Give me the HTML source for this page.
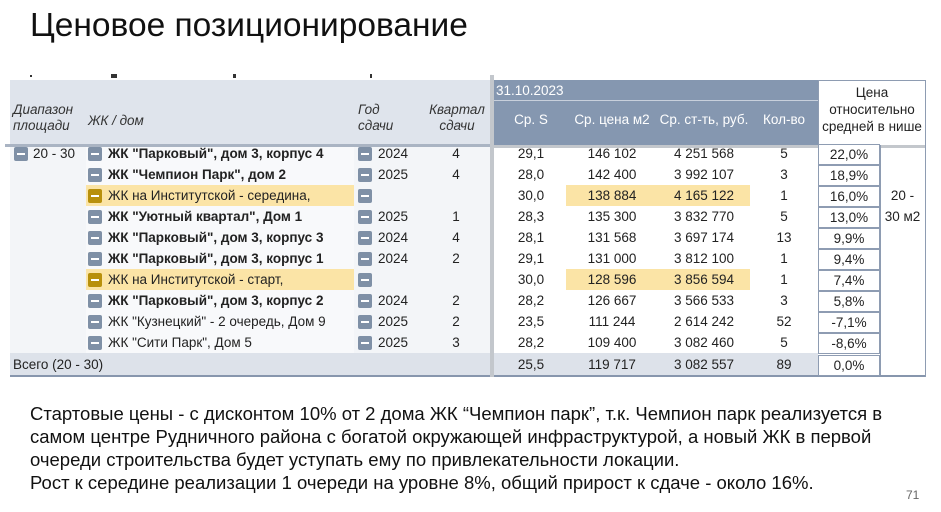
<!DOCTYPE html>
<html><head><meta charset="utf-8"><style>
*{margin:0;padding:0;box-sizing:border-box}
body{width:941px;height:512px;background:#fff;font-family:"Liberation Sans",Arial,sans-serif;position:relative;overflow:hidden;color:#222}
.a{position:absolute;white-space:nowrap}
.t{font-size:13.5px;line-height:21px}
.m{position:absolute;width:14px;height:14px;background:#7f90a6;border-radius:2px}
.m::after{content:"";position:absolute;left:3px;right:3px;top:6px;height:2px;background:#fff}
.my{background:#b8900c}
.c{text-align:center}
.b{font-weight:bold}
.pc{position:absolute;left:818px;width:62px;height:21px;border:1px solid #8e9cb2;text-align:center;font-size:13.5px;line-height:19px;background:#fff}
</style></head><body>
<div class="a" style="left:30px;top:7px;font-size:33.5px;color:#111">Ценовое позиционирование</div>
<div class="a" style="left:30px;top:75px;width:2px;height:2px;background:#333"></div>
<div class="a" style="left:111px;top:74px;width:6px;height:4px;background:#333"></div>
<div class="a" style="left:233px;top:74px;width:3px;height:4px;background:#333"></div>
<div class="a" style="left:370px;top:74px;width:2px;height:4px;background:#333"></div>
<div class="a" style="left:10px;top:80px;width:480px;height:65px;background:#dfe4ec"></div>
<div class="a" style="left:5px;top:144px;width:485px;height:3px;background:#aab4c3"></div>
<div class="a" style="left:10px;top:147px;width:480px;height:206px;background:#f3f5f8"></div>
<div class="a" style="left:86px;top:147px;width:268px;height:206px;background:#f8f9fb"></div>
<div class="a" style="left:10px;top:353px;width:808px;height:22px;background:#dde2ea"></div>
<div class="a" style="left:10px;top:375px;width:916px;height:2px;background:#8796ad"></div>
<div class="a" style="left:490px;top:75px;width:4px;height:302px;background:#c3c7cc"></div>
<div class="a t" style="left:13px;top:102px;font-style:italic;line-height:16px;color:#333">Диапазон<br>площади</div>
<div class="a t" style="left:88px;top:110px;font-style:italic;color:#333">ЖК / дом</div>
<div class="a t" style="left:358px;top:102px;font-style:italic;line-height:16px;color:#333">Год<br>сдачи</div>
<div class="a t c" style="left:425px;top:102px;width:64px;font-style:italic;line-height:16px;color:#333">Квартал<br>сдачи</div>
<div class="a" style="left:494px;top:80px;width:324px;height:65px;background:#8597b0"></div>
<div class="a" style="left:494px;top:100px;width:324px;height:1px;background:#c8d0dc"></div>
<div class="a t" style="left:496px;top:80px;color:#fff">31.10.2023</div>
<div class="a t c" style="left:505px;top:109px;width:52px;color:#fff">Ср. S</div>
<div class="a t c" style="left:566px;top:109px;width:92px;color:#fff">Ср. цена м2</div>
<div class="a t c" style="left:654px;top:109px;width:100px;color:#fff">Ср. ст-ть, руб.</div>
<div class="a t c" style="left:756px;top:109px;width:56px;color:#fff">Кол-во</div>
<div class="a" style="left:818px;top:80px;width:108px;height:65px;border:1px solid #8e9cb2;border-bottom:none"></div>
<div class="a c" style="left:818px;top:84px;width:108px;font-size:13.5px;line-height:17px">Цена<br>относительно<br>средней в нише</div>
<div class="a" style="left:494px;top:145px;width:432px;height:3px;background:#c3c7cc"></div>
<div class="a" style="left:925px;top:80px;width:1px;height:297px;background:#8e9cb2"></div>
<div class="a" style="left:880px;top:145px;width:1px;height:230px;background:#8e9cb2"></div>
<div class="a t c" style="left:880px;top:185px;width:45px;line-height:21px">20 -<br>30 м2</div>
<div class="a" style="left:86px;top:185px;width:268px;height:21px;background:#fbe4a6"></div>
<div class="a" style="left:566px;top:185px;width:184px;height:21px;background:#fbe4a6"></div>
<div class="a" style="left:86px;top:269px;width:268px;height:21px;background:#fbe4a6"></div>
<div class="a" style="left:566px;top:269px;width:184px;height:21px;background:#fbe4a6"></div>
<div class="m" style="left:14px;top:147px"></div>
<div class="a t" style="left:33px;top:143px">20 - 30</div>
<div id="rows"></div>
<div class="a t" style="left:13px;top:354px">Всего (20 - 30)</div>
<div class="a t c" style="left:505px;top:354px;width:52px">25,5</div>
<div class="a t c" style="left:568px;top:354px;width:88px">119 717</div>
<div class="a t c" style="left:656px;top:354px;width:96px">3 082 557</div>
<div class="a t c" style="left:756px;top:354px;width:56px">89</div>
<div class="pc" style="top:355px">0,0%</div>
<div class="a" style="left:30px;top:402px;font-size:18.5px;line-height:23px;color:#111;white-space:normal;width:880px">Стартовые цены - с дисконтом 10% от 2 дома ЖК “Чемпион парк”, т.к. Чемпион парк реализуется в самом центре Рудничного района с богатой окружающей инфраструктурой, а новый ЖК в первой очереди строительства будет уступать ему по привлекательности локации.<br>Рост к середине реализации 1 очереди на уровне 8%, общий прирост к сдаче - около 16%.</div>
<div class="a" style="left:906px;top:488px;font-size:12px;color:#666">71</div>
<script>
var R=[
["ЖК \"Парковый\", дом 3, корпус 4",1,"2024","4","29,1","146 102","4 251 568","5","22,0%",0],
["ЖК \"Чемпион Парк\", дом 2",1,"2025","4","28,0","142 400","3 992 107","3","18,9%",0],
["ЖК на Институтской - середина,",0,"","","30,0","138 884","4 165 122","1","16,0%",1],
["ЖК \"Уютный квартал\", Дом 1",1,"2025","1","28,3","135 300","3 832 770","5","13,0%",0],
["ЖК \"Парковый\", дом 3, корпус 3",1,"2024","4","28,1","131 568","3 697 174","13","9,9%",0],
["ЖК \"Парковый\", дом 3, корпус 1",1,"2024","2","29,1","131 000","3 812 100","1","9,4%",0],
["ЖК на Институтской - старт,",0,"","","30,0","128 596","3 856 594","1","7,4%",1],
["ЖК \"Парковый\", дом 3, корпус 2",1,"2024","2","28,2","126 667","3 566 533","3","5,8%",0],
["ЖК \"Кузнецкий\" - 2 очередь, Дом 9",0,"2025","2","23,5","111 244","2 614 242","52","-7,1%",0],
["ЖК \"Сити Парк\", Дом 5",0,"2025","3","28,2","109 400","3 082 460","5","-8,6%",0]];
var h="";
R.forEach(function(r,i){var y=143+i*21;
h+='<div class="m'+(r[9]?' my':'')+'" style="left:88px;top:'+(y+4)+'px"></div>';
h+='<div class="a t'+(r[1]?' b':'')+'" style="left:108px;top:'+y+'px">'+r[0].replace(/"/g,'&quot;')+'</div>';
h+='<div class="m" style="left:358px;top:'+(y+4)+'px"></div>';
h+='<div class="a t" style="left:378px;top:'+y+'px">'+r[2]+'</div>';
h+='<div class="a t c" style="left:425px;top:'+y+'px;width:62px">'+r[3]+'</div>';
h+='<div class="a t c" style="left:505px;top:'+y+'px;width:52px">'+r[4]+'</div>';
h+='<div class="a t c" style="left:568px;top:'+y+'px;width:88px">'+r[5]+'</div>';
h+='<div class="a t c" style="left:656px;top:'+y+'px;width:96px">'+r[6]+'</div>';
h+='<div class="a t c" style="left:756px;top:'+y+'px;width:56px">'+r[7]+'</div>';
h+='<div class="pc" style="top:'+(y+1)+'px">'+r[8]+'</div>';
});
document.getElementById("rows").innerHTML=h;
</script>
</body></html>
